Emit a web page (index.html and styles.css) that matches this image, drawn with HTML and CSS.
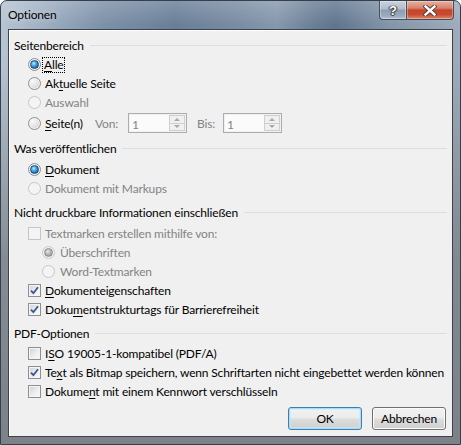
FILE: index.html
```html
<!DOCTYPE html>
<html lang="de">
<head>
<meta charset="utf-8">
<title>Optionen</title>
<link rel="stylesheet" href="styles.css">
</head>
<body>
<div class="window">
  <div class="titlebar">
    <span class="title">Optionen</span>
    <div class="caption-buttons">
      <div class="cb cb-help">?</div>
      <div class="cb cb-close">
        <svg width="14" height="11" viewBox="0 0 14 11"><path d="M2.5 1.5 L11.5 9.5 M11.5 1.5 L2.5 9.5" stroke="#4a3a36" stroke-width="4.2" stroke-linecap="square" fill="none"/><path d="M2.5 1.5 L11.5 9.5 M11.5 1.5 L2.5 9.5" stroke="#ffffff" stroke-width="2.4" stroke-linecap="square" fill="none"/></svg>
      </div>
    </div>
  </div>
  <div class="client">
    <div class="section first">
      <div class="header"><span>Seitenbereich</span><i class="rule"></i></div>
      <div class="row"><span class="radio checked"></span><span class="label focus"><u>A</u>lle</span></div>
      <div class="row"><span class="radio"></span><span class="label">Ak<u>t</u>uelle Seite</span></div>
      <div class="row disabled"><span class="radio"></span><span class="label">Auswahl</span></div>
      <div class="row pages">
        <span class="radio"></span><span class="label pl"><u>S</u>eite(n)</span>
        <span class="dim von">Von:</span>
        <span class="spin"><span class="spin-val">1</span><span class="spin-btns"><span class="sb up"></span><span class="sb down"></span></span></span>
        <span class="dim bis">Bis:</span>
        <span class="spin"><span class="spin-val">1</span><span class="spin-btns"><span class="sb up"></span><span class="sb down"></span></span></span>
      </div>
    </div>
    <div class="section">
      <div class="header"><span>Was veröffentlichen</span><i class="rule"></i></div>
      <div class="row"><span class="radio checked"></span><span class="label"><u>D</u>okument</span></div>
      <div class="row disabled"><span class="radio"></span><span class="label">Dokument mit Markups</span></div>
    </div>
    <div class="section">
      <div class="header"><span>Nicht druckbare Informationen einschließen</span><i class="rule"></i></div>
      <div class="row disabled"><span class="check"></span><span class="label">Textmarken erstellen mithilfe von:</span></div>
      <div class="row sub disabled"><span class="radio checked"></span><span class="label">Überschriften</span></div>
      <div class="row sub disabled"><span class="radio"></span><span class="label">Word-Textmarken</span></div>
      <div class="row"><span class="check checked"><svg width="11" height="11" viewBox="0 0 11 11"><path d="M2 5.6 L4.4 8.2 L9 2.2" stroke="#3c5491" stroke-width="1.8" fill="none"/></svg></span><span class="label"><u>D</u>okumenteigenschaften</span></div>
      <div class="row"><span class="check checked"><svg width="11" height="11" viewBox="0 0 11 11"><path d="M2 5.6 L4.4 8.2 L9 2.2" stroke="#3c5491" stroke-width="1.8" fill="none"/></svg></span><span class="label">Doku<u>m</u>entstrukturtags für Barrierefreiheit</span></div>
    </div>
    <div class="section last">
      <div class="header"><span>PDF-Optionen</span><i class="rule"></i></div>
      <div class="row"><span class="check"></span><span class="label">I<u>S</u>O 19005-1-kompatibel (PDF/A)</span></div>
      <div class="row"><span class="check checked"><svg width="11" height="11" viewBox="0 0 11 11"><path d="M2 5.6 L4.4 8.2 L9 2.2" stroke="#3c5491" stroke-width="1.8" fill="none"/></svg></span><span class="label">Te<u>x</u>t als Bitmap speichern, wenn Schriftarten nicht eingebettet werden können</span></div>
      <div class="row"><span class="check"></span><span class="label">Dokume<u>n</u>t mit einem Kennwort verschlüsseln</span></div>
    </div>
    <div class="buttons">
      <button class="btn default">OK</button>
      <button class="btn">Abbrechen</button>
    </div>
  </div>
</div>
</body>
</html>
```

FILE: styles.css
```css
* { box-sizing: border-box; }
html, body { margin: 0; padding: 0; }
body {
  width: 461px;
  height: 445px;
  overflow: hidden;
  background: #ffffff;
  font-family: Lato, "Liberation Sans", Arial, sans-serif;
  font-size: 12px;
  letter-spacing: -0.16px;
  color: #000;
}
.window {
  width: 461px;
  height: 445px;
  border: 1px solid #34404d;
  border-radius: 7px 7px 0 0;
  display: flex;
  flex-direction: column;
  background:
    linear-gradient(to bottom, rgba(255,255,255,0.18) 0, rgba(255,255,255,0) 24px),
    linear-gradient(to bottom, rgba(128,134,140,0) 0, rgba(128,134,140,0) 60px, rgba(124,130,136,0.85) 260px, #7c8287 100%),
    linear-gradient(to right, #b7c4d2 0%, #a2b2c4 8%, #7d91a9 22%, #697e98 38%, #7a8da4 52%, #8698ad 60%, #6b7f97 68%, #5f758e 73%, #8294a8 84%, #9eacbc 100%);
}
.titlebar {
  height: 28px;
  display: flex;
  justify-content: space-between;
  align-items: flex-start;
  padding: 0 6px 0 7px;
}
.title {
  padding-top: 6px;
  line-height: 16px;
  font-size: 12px;
  color: #000;
  text-shadow: 0 0 6px rgba(255,255,255,0.6);
}
.caption-buttons { display: flex; }
.cb {
  height: 19px;
  border: 1px solid #46505c;
  border-top: none;
  display: flex;
  align-items: center;
  justify-content: center;
}
.cb-help {
  width: 27px;
  border-radius: 0 0 0 4px;
  border-right: none;
  background: linear-gradient(#c9d3de 0%, #b0bccb 45%, #8e9db0 50%, #9aa9bb 80%, #b3c0cf 100%);
  box-shadow: inset 0 0 0 1px rgba(255,255,255,0.35);
  color: #fff;
  font-family: "Liberation Sans", Arial, sans-serif;
  font-weight: bold;
  font-size: 13px;
  line-height: 13px;
  letter-spacing: 0;
  text-shadow: 0 0 1px #333, 1px 0 1px #333, -1px 0 1px #333, 0 1px 1px #333;
}
.cb-close {
  width: 48px;
  border-radius: 0 0 4px 0;
  background: linear-gradient(#e9b1a0 0%, #d8806a 40%, #c4452c 50%, #c94a30 75%, #e0896a 100%);
  box-shadow: inset 0 0 0 1px rgba(255,255,255,0.3);
}
.cb-close svg { display: block; }
.client {
  flex: 1;
  margin: 0 7px 7px;
  background: #f0f0f0;
  border: 1px solid #3e4347;
  box-shadow: inset 1px 1px 0 #ffffff;
  padding: 5px 5px 0 5px;
  display: flex;
  flex-direction: column;
}
.section { display: flex; flex-direction: column; }
.section + .section { margin-top: 4px; }
.section:not(.first) .header + .row { margin-top: 2px; }
.section.last .header + .row { margin-top: 1px; }
.header {
  height: 20px;
  display: flex;
  align-items: center;
}
.rule {
  flex: 1;
  height: 1px;
  background: #d5dfe5;
  margin-left: 6px;
  margin-right: 0;
}
.row {
  height: 19px;
  display: flex;
  align-items: center;
  padding-left: 14px;
}
.row.sub { padding-left: 28px; }
.row.pages { height: 22px; }
.label { margin-left: 4px; white-space: nowrap; }
.row.sub .label { margin-left: 5px; }
.focus {
  outline: 1px dotted #000;
  outline-offset: 0;
  padding: 0 1px;
  margin-left: 2px;
  line-height: 14px;
}
.disabled .label { color: #838383; }
u { text-decoration: underline; text-underline-offset: 2px; }

.radio {
  width: 13px;
  height: 13px;
  flex: none;
  border-radius: 50%;
  border: 1px solid #8e8f8f;
  background: radial-gradient(circle at 35% 30%, #f8f8f8 0%, #e6e6e6 45%, #cfcfcf 100%);
  box-shadow: inset 0 0 0 1px rgba(255,255,255,0.6);
  display: flex;
  align-items: center;
  justify-content: center;
}
.radio.checked::after {
  content: "";
  width: 7px;
  height: 7px;
  border-radius: 50%;
  border: 1px solid #1b4b7d;
  background: radial-gradient(circle at 40% 35%, #c6ecff 0%, #4aaee8 35%, #1a66aa 75%, #0f4478 100%);
}
.disabled .radio {
  border-color: #c6c6c6;
  background: #f4f4f4;
  box-shadow: none;
}
.disabled .radio.checked::after {
  border-color: #8d8d8d;
  background: radial-gradient(circle at 40% 35%, #e8e8e8 0%, #b5b5b5 45%, #8a8a8a 100%);
}
.check {
  width: 13px;
  height: 13px;
  flex: none;
  border: 1px solid #8e8f8f;
  background: linear-gradient(135deg, #cdd1d6 0%, #eceef0 55%, #fbfbfb 100%);
  box-shadow: inset 0 0 0 1px #f4f4f4;
  display: flex;
  align-items: center;
  justify-content: center;
}
.check svg { display: block; }
.disabled .check {
  border-color: #c6c6c6;
  background: #f4f4f4;
  box-shadow: none;
}

.pl { width: 50px; }
.dim { color: #838383; }
.von { width: 33px; }
.bis { width: 26px; margin-left: 10px; }
.spin {
  width: 59px;
  height: 20px;
  border: 1px solid #abadb3;
  background: #fbfbfb;
  box-shadow: inset 0 0 0 1px #f0f0f0;
  display: flex;
  align-items: stretch;
  padding: 1px 1px 1px 0;
}
.spin-val {
  flex: 1;
  color: #838383;
  padding-left: 3px;
  line-height: 18px;
  padding-top: 1px;
}
.spin-btns {
  width: 16px;
  display: flex;
  flex-direction: column;
}
.sb {
  flex: 1;
  border: 1px solid #cfcfcf;
  background: #f0f0f0;
  display: flex;
  align-items: center;
  justify-content: center;
}
.sb + .sb { border-top: none; }
.sb.up::after {
  content: "";
  border-left: 3px solid transparent;
  border-right: 3px solid transparent;
  border-bottom: 3px solid #a8a8a8;
}
.sb.down::after {
  content: "";
  border-left: 3px solid transparent;
  border-right: 3px solid transparent;
  border-top: 3px solid #a8a8a8;
}

.buttons {
  display: flex;
  justify-content: flex-end;
  gap: 10px;
  margin-top: 6px;
  padding-right: 1px;
}
.btn {
  width: 74px;
  height: 23px;
  padding: 0;
  border: 1px solid #707070;
  border-radius: 3px;
  background: linear-gradient(#f2f2f2 0%, #ebebeb 48%, #dddddd 52%, #cfcfcf 100%);
  box-shadow: inset 0 0 0 1px #fbfbfb;
  font-family: Lato, "Liberation Sans", Arial, sans-serif;
  font-size: 12px;
  letter-spacing: -0.16px;
  color: #000;
}
.btn.default {
  border-color: #3c7fb1;
  box-shadow: inset 0 0 0 1px #a9ddf6, inset 0 0 0 2px rgba(200,236,252,0.6);
}
```
